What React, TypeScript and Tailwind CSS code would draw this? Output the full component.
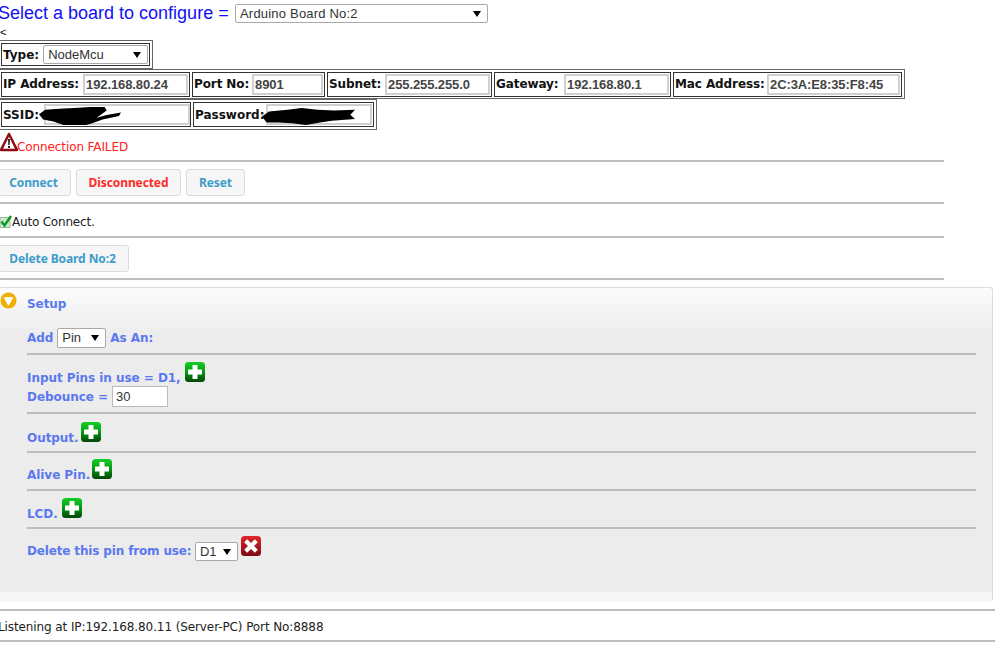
const ui = "font-['DejaVu_Sans',Verdana,sans-serif]";

function Input({ value, w }: { value: string; w: string }) {
  return (
    <input
      readOnly
      value={value}
      className={`${w} h-[21px] border-2 border-[#d0d0d0] bg-white px-[1px] font-['Liberation_Sans',Arial,sans-serif] text-[13px] text-[#444]`}
    />
  );
}

function Field({ label, value, w, cell }: { label: string; value: string; w: string; cell: string }) {
  return (
    <div className={`${cell} flex h-[25px] items-center justify-between border border-[#333] pl-[1px] pr-[1px] text-[12px] font-bold tracking-[-0.1px] text-[#111]`}>
      <span>{label}</span>
      <Input value={value} w={w} />
    </div>
  );
}

function Caret() {
  return <span className="ml-auto h-0 w-0 border-x-[4px] border-t-[6px] border-x-transparent border-t-black" />;
}

function Select({ value, cls }: { value: string; cls: string }) {
  return (
    <div className={`${cls} flex items-center rounded-[2px] border border-[#a9a9a9] bg-white pl-[4px] pr-[6px] font-['Liberation_Sans',Arial,sans-serif] text-[13px] font-normal text-[#333]`}>
      <span>{value}</span>
      <Caret />
    </div>
  );
}

function Plus() {
  return (
    <svg viewBox="0 0 20 20" className="h-[20px] w-[20px] shrink-0">
      <defs>
        <linearGradient id="plusBg" x1="0" y1="0" x2="0" y2="1">
          <stop offset="0" stopColor="#12d028" />
          <stop offset="0.5" stopColor="#049a10" />
          <stop offset="1" stopColor="#024508" />
        </linearGradient>
      </defs>
      <rect x="0" y="0" width="20" height="20" rx="3.5" fill="url(#plusBg)" />
      <path d="M7.500 3h5v4.500H17v5h-4.500V17h-5v-4.500H3v-5h4.500z" fill="#fff" />
    </svg>
  );
}

function Cross() {
  return (
    <svg viewBox="0 0 20 20" className="h-[20px] w-[20px] shrink-0">
      <defs>
        <linearGradient id="crossBg" x1="0" y1="0" x2="0" y2="1">
          <stop offset="0" stopColor="#e0262c" />
          <stop offset="1" stopColor="#7d0a10" />
        </linearGradient>
      </defs>
      <rect x="0" y="0" width="20" height="20" rx="3.5" fill="url(#crossBg)" />
      <path d="M6.200 3.200 10 7l3.800-3.800 3 3L13 10l3.800 3.800-3 3L10 13l-3.800 3.800-3-3L7 10 3.200 6.200z" fill="#fff" />
    </svg>
  );
}

function Scribble({ cls, d }: { cls: string; d: string }) {
  return (
    <svg viewBox="0 0 80 20" preserveAspectRatio="none" className={`absolute ${cls}`}>
      <path d={d} fill="#000" />
    </svg>
  );
}

function Btn({ children, cls }: { children: string; cls: string }) {
  return (
    <button className={`${cls} h-[27px] rounded-[3px] border border-[#dcdcdc] bg-[#f6f6f6] pt-[2px] font-['Noto_Sans',sans-serif] text-[12px] font-bold tracking-[-0.1px]`}>
      {children}
    </button>
  );
}

function PinRow({ label, drop }: { label: string; drop: string }) {
  return (
    <div className={`${panelText} flex items-end gap-[4px] leading-[16px]`}>
      <span>{label}</span>
      <span className={drop}>
        <Plus />
      </span>
    </div>
  );
}

const hr = "h-[2px] bg-[#bdbdbd]";
const panelText = "text-[12px] font-bold tracking-[-0.05px] text-[#5b78f0]";

export default function App() {
  return (
    <div className={`${ui} -ml-[2px] h-[649px] w-[1002px] overflow-hidden bg-white`}>
      {/* board picker */}
      <div className="flex h-[27px] items-center font-['Liberation_Sans',Arial,sans-serif] text-[18px] text-[#1010f5]">
        <span className="w-[237px] whitespace-nowrap">Select a board to configure =</span>
        <Select value="Arduino Board No:2" cls="h-[19px] w-[253px] tracking-[0.2px]" />
      </div>
      <div className="h-[13px] pl-[2px] font-['Liberation_Sans',Arial,sans-serif] text-[11px] leading-[11px] text-black">&lt;</div>

      {/* type */}
      <div className="flex h-[29px] w-[155px] items-center border border-[#666] px-[2px]">
        <div className="flex h-[23px] w-full items-center gap-[4px] border border-[#333] pl-[1px] pr-[1px] text-[12px] font-bold text-[#111]">
          <span>Type:</span>
          <Select value="NodeMcu" cls="h-[19px] w-[108px]" />
        </div>
      </div>

      {/* network settings */}
      <div className="flex h-[30px] w-[907px] items-center gap-[2px] border border-[#666] px-[2px]">
        <Field label="IP Address:" value="192.168.80.24" w="w-[105px]" cell="w-[189px]" />
        <Field label="Port No:" value="8901" w="w-[71px]" cell="w-[133px]" />
        <Field label="Subnet:" value="255.255.255.0" w="w-[105px]" cell="w-[165px]" />
        <Field label="Gateway:" value="192.168.80.1" w="w-[105px]" cell="w-[177px]" />
        <Field label="Mac Address:" value="2C:3A:E8:35:F8:45" w="w-[133px]" cell="w-[229px]" />
      </div>

      {/* wifi */}
      <div className="relative flex h-[31px] w-[379px] items-center gap-[2px] border border-[#666] px-[2px]">
        <div className="flex h-[25px] w-[190px] items-center justify-between border border-[#333] pl-[1px] text-[12px] font-bold text-[#111]">
          <span>SSID:</span>
          <Input value="" w="w-[146px]" />
        </div>
        <div className="flex h-[25px] w-[181px] items-center justify-between border border-[#333] pl-[1px] pr-[1px] text-[12px] font-bold text-[#111]">
          <span>Password:</span>
          <Input value="" w="w-[106px]" />
        </div>
        <Scribble cls="left-[40px] top-[7px] h-[18px] w-[82px]" d="M0 8 6 3 20 2 34 1 50 0 64 0 66 4 60 9 56 12 66 9 80 6 78 10 62 14 52 18 46 20 34 20 24 20 14 16 4 14Z" />
        <Scribble cls="left-[263px] top-[8px] h-[17px] w-[93px]" d="M0 10 6 4 22 2 34 0 48 2 62 3 80 2 76 8 80 13 60 15 50 17 38 20 26 18 14 17 4 17Z" />
      </div>

      {/* status */}
      <div className="flex h-[30px] items-end pb-[5px] pl-[2px] text-[12px] leading-[15px] tracking-[-0.1px] text-[#ff2020]">
        <svg viewBox="0 0 18 20" className="mb-[3px] h-[20px] w-[18px] shrink-0">
          <path d="M9 2 17 18H1Z" fill="#fff" stroke="#8c0a16" strokeWidth="2.500" strokeLinejoin="round" />
          <path d="M8 7h2l-.3 6H8.300ZM8 14h2v2H8Z" fill="#222" />
        </svg>
        <span className="-ml-[1px]">Connection FAILED</span>
      </div>
      <div className={`${hr} w-[946px]`} />

      <div className="flex h-[40px] items-center gap-[5px]">
        <Btn cls="w-[73px] pr-[2px] text-[#3d9ccb]">Connect</Btn>
        <Btn cls="w-[105px] text-[#ff2a2a]">Disconnected</Btn>
        <Btn cls="w-[59px] text-[#3d9ccb]">Reset</Btn>
      </div>
      <div className={`${hr} w-[946px]`} />

      <div className="flex h-[32px] items-center pl-[2px] pt-[3px] text-[12px] tracking-[-0.2px] text-[#222]">
        <svg viewBox="0 0 12 13" className="h-[13px] w-[12px] shrink-0">
          <rect x="0" y="2.500" width="10" height="10" fill="#cfe8cf" stroke="#9ab89a" />
          <path d="M1.500 6.500 4.500 10.500 11 1" fill="none" stroke="#0a9a22" strokeWidth="2.400" />
        </svg>
        <span>Auto Connect.</span>
      </div>
      <div className={`${hr} w-[946px]`} />

      <div className="flex h-[40px] items-center">
        <Btn cls="w-[131px] pr-[2px] text-[#3d9ccb]">Delete Board No:2</Btn>
      </div>
      <div className={`${hr} w-[946px]`} />

      {/* setup panel */}
      <div className="mt-[7px] h-[315px] w-[995px] rounded-[3px] border border-[#dcdcdc] bg-[#ececec] bg-[linear-gradient(#fbfbfb,#ececec_48px)]">
        <div className="flex h-[24px] items-start pl-[1px] pt-[4px]">
          <svg viewBox="0 0 18 18" className="h-[17px] w-[17px] shrink-0">
            <circle cx="9" cy="9" r="8.500" fill="#eeb000" />
            <path d="M4.500 6h9L9 14Z" fill="#fff" stroke="#fff" strokeLinejoin="round" />
          </svg>
          <span className={`${panelText} ml-[10px] mt-[4px] leading-[16px]`}>Setup</span>
        </div>
        <div className="ml-[28px] w-[949px]">
          <div className={`${panelText} mt-[12px] flex h-[27px] items-center gap-[4px]`}>
            <span>Add</span>
            <Select value="Pin" cls="h-[20px] w-[49px]" />
            <span>As An:</span>
          </div>
          <div className={`${hr} mb-[7px] mt-[2px]`} />

          <PinRow label="Input Pins in use = D1," drop="mb-[4px]" />
          <div className={`${panelText} flex h-[21px] items-center gap-[4px]`}>
            <span>Debounce =</span>
            <input readOnly value="30" className="h-[21px] w-[56px] border border-[#bbb] bg-white px-[3px] font-['Liberation_Sans',Arial,sans-serif] text-[13px] font-normal text-[#333]" />
          </div>
          <div className={`${hr} mb-[8px] mt-[5px]`} />

          <PinRow label="Output." drop="-ml-[2px] mb-[4px]" />
          <div className={`${hr} mb-[6px] mt-[5px]`} />

          <PinRow label="Alive Pin." drop="-ml-[2px] mb-[4px]" />
          <div className={`${hr} mb-[7px] mt-[6px]`} />

          <PinRow label="LCD." drop="mb-[4px]" />
          <div className={`${hr} mb-[6px] mt-[5px]`} />

          <div className={`${panelText} flex items-start`}>
            <span className="mt-[8px] w-[168px] leading-[16px] tracking-[-0.15px]">Delete this pin from use:</span>
            <Select value="D1" cls="mt-[7px] h-[19px] w-[43px]" />
            <span className="ml-[3px] mt-[1px]">
              <Cross />
            </span>
          </div>
        </div>
        <div className="mt-[31px] h-[10px] bg-[#f7f7f7]" />
      </div>

      {/* footer */}
      <div className={`${hr} mt-[7px] w-[997px]`} />
      <div className="flex h-[29px] items-center pt-[3px] text-[12px] tracking-[-0.1px] text-[#222]">
        Listening at IP:192.168.80.11 (Server-PC) Port No:8888
      </div>
      <div className={`${hr} w-[997px]`} />
    </div>
  );
}
